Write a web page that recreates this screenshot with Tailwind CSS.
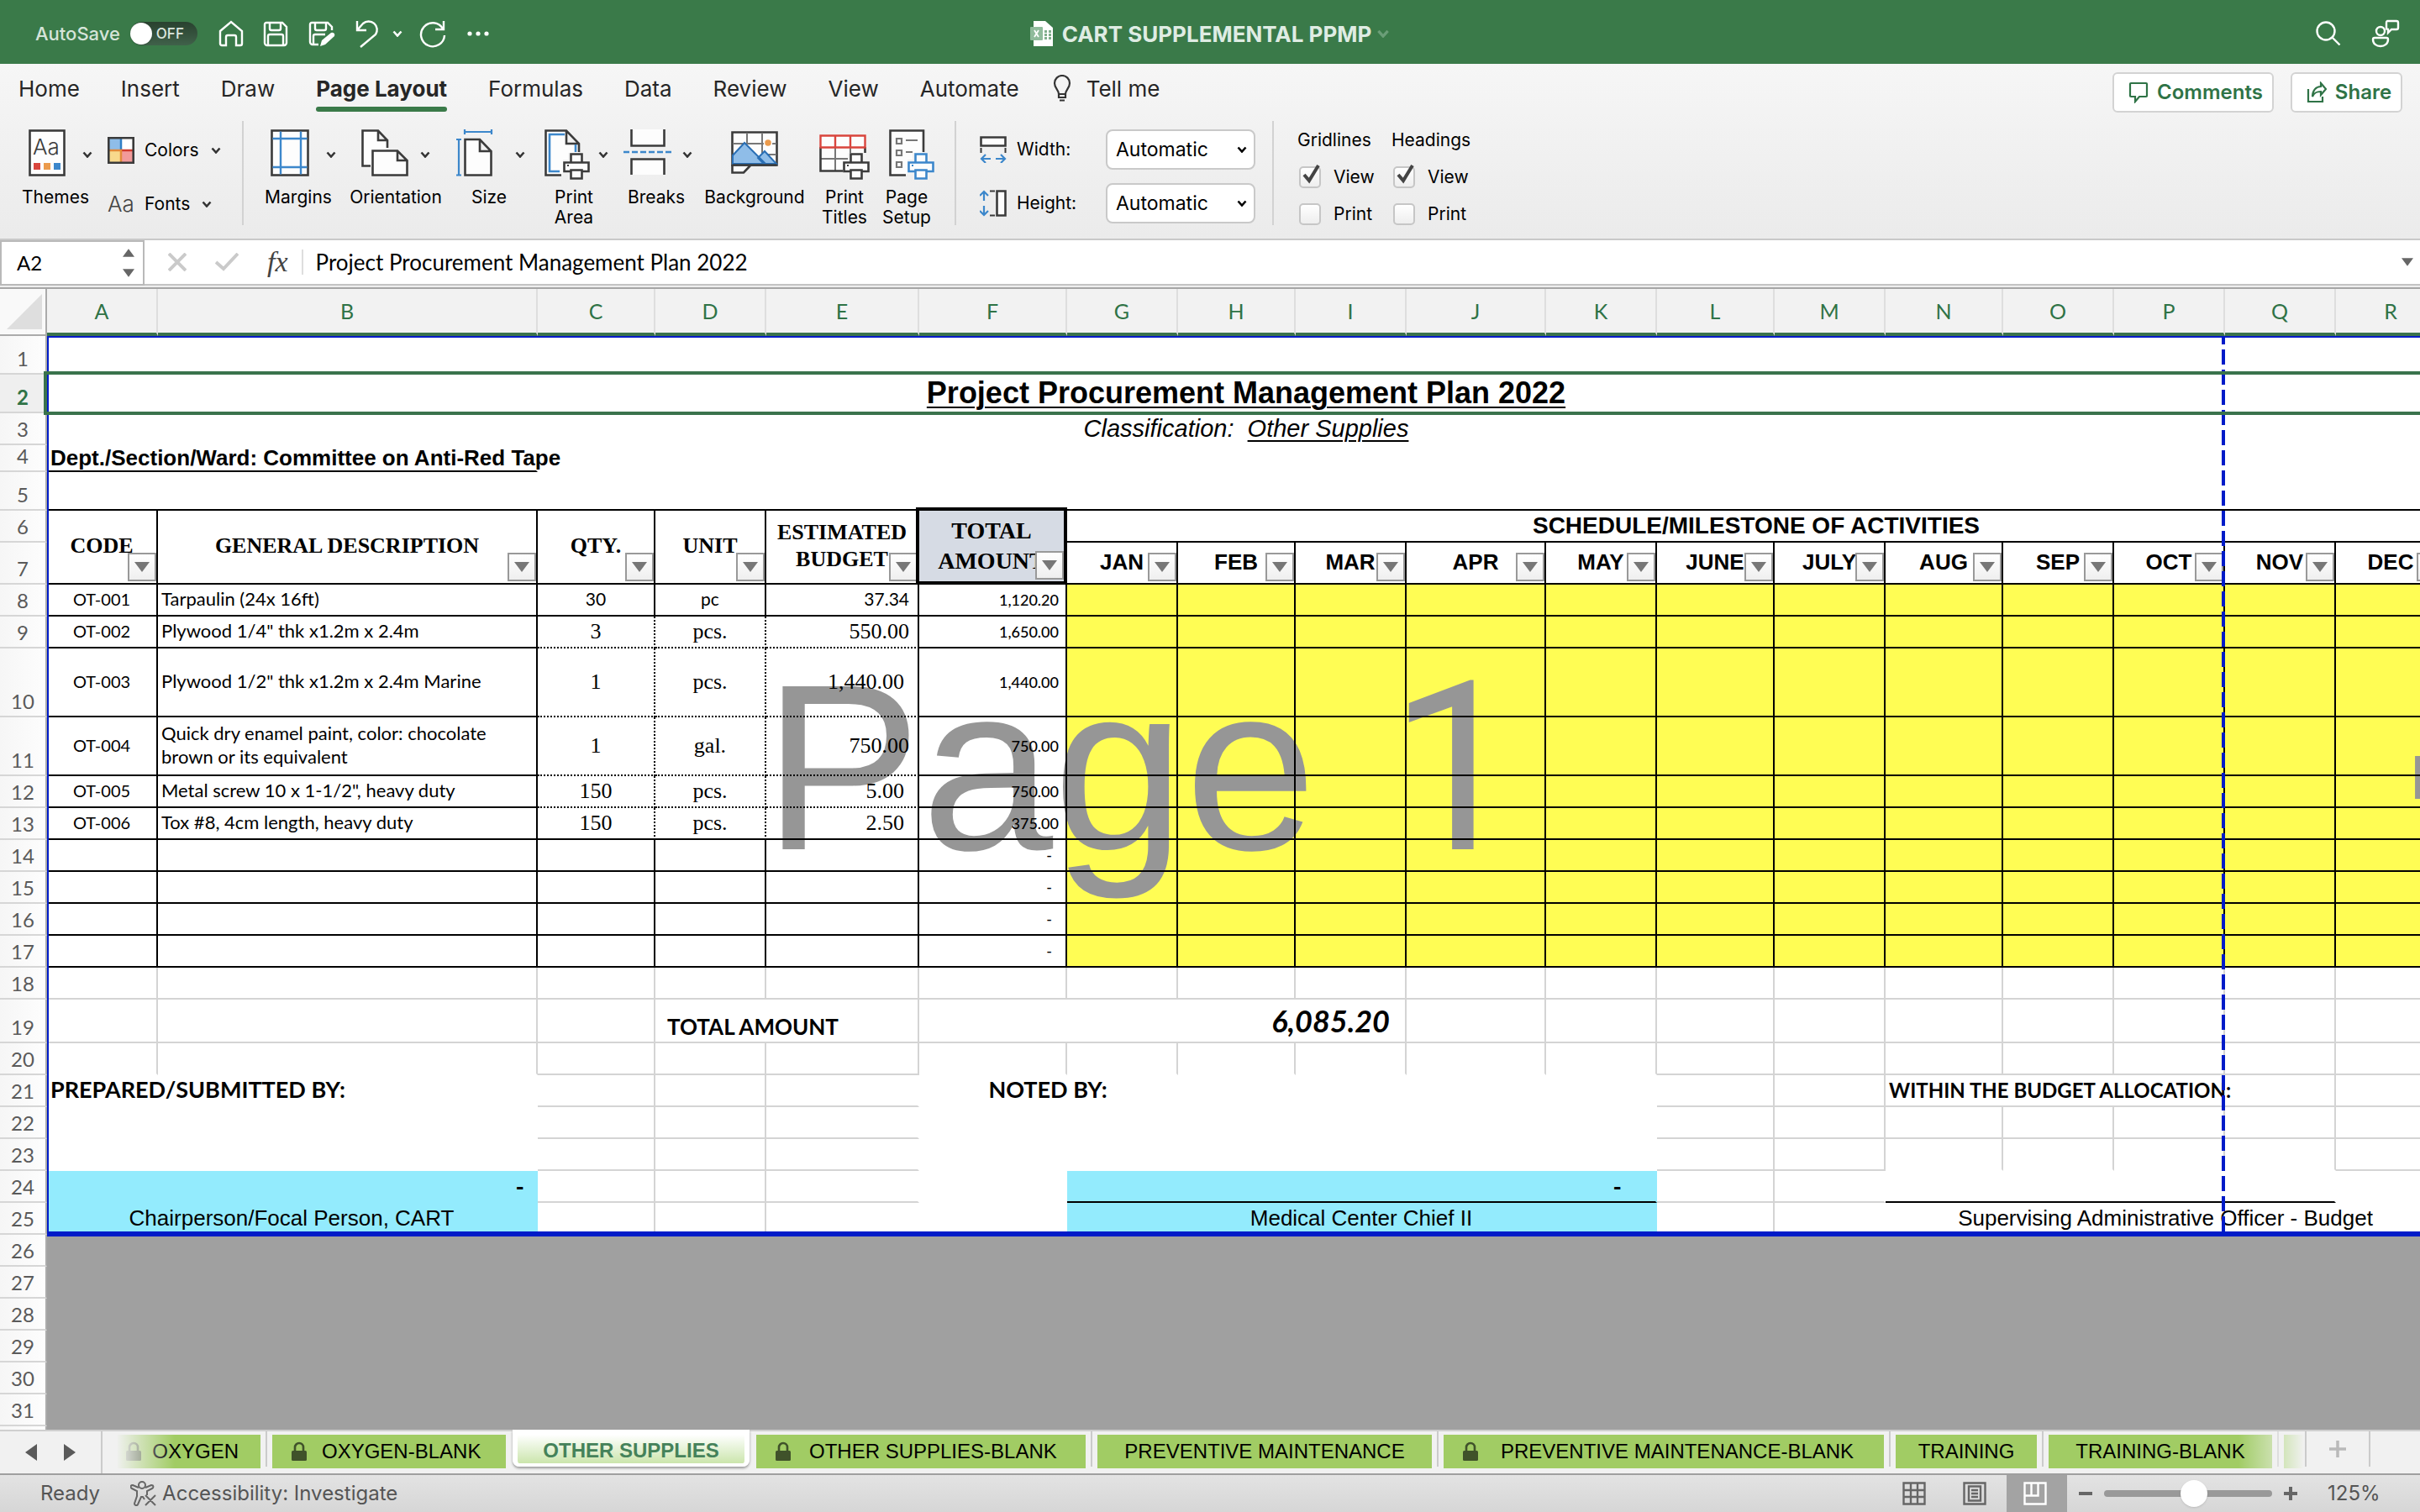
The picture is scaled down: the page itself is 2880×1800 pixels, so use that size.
<!DOCTYPE html>
<html lang="en">
<head>
  <meta charset="UTF-8" />
  <meta name="viewport" content="width=device-width, initial-scale=1.0"/>
  <title>CART SUPPLEMENTAL PPMP</title>
  <script src="https://cdn.jsdelivr.net/npm/@tailwindcss/browser@4"></script>
</head>
<body class="flex h-screen flex-col overflow-hidden bg-white font-['Inter',sans-serif] text-black">

  <!-- Shared symbols -->
  <svg class="hidden">
    <symbol id="caret" viewBox="0 0 12 8"><path d="M1.5 1.5 6 6.5l4.500-5" fill="none" stroke="currentColor" stroke-width="2.600"/></symbol>
    <symbol id="printer" viewBox="0 0 32 32">
      <path d="M8 0h16v12H8zM0 10h32v14H0zM8 20h16v12H8z" fill="#f2f2f2" stroke="#f2f2f2" stroke-width="4"/>
      <path d="M9.500 12V1.500h13V12M9.500 22H1.500V11.500h29V22h-8M9.500 20.500h13v10h-13z" fill="#fdfdfd" stroke="currentColor" stroke-width="2.600"/>
      <path d="M5 15h2" stroke="currentColor" stroke-width="2"/>
    </symbol>
    <symbol id="lock" viewBox="0 0 20 24"><path d="M5 12V7a5 5 0 0 1 10 0v5" fill="none" stroke="currentColor" stroke-width="2.600"/><rect x="1" y="11" width="18" height="12" rx="1.500" fill="currentColor"/></symbol>
    <symbol id="filter" viewBox="0 0 18 12"><path d="M0 0h18L9 12z" fill="currentColor"/></symbol>
  </svg>

  <!-- Title bar -->
  <header class="grid h-19 shrink-0 grid-cols-[1fr_auto_1fr] items-center bg-[#3a7a49] px-6 pt-1 text-white">
    <div class="flex items-center pl-[18px]">
      <label for="autosave" class="text-[22px] font-medium text-[#d5e4d9]">AutoSave</label>
      <span class="relative ml-3 flex">
        <input id="autosave" type="checkbox" role="switch" class="h-7 w-20 appearance-none rounded-full bg-gradient-to-b from-[#29412f] to-[#40614a] before:block before:size-[26px] before:translate-y-px before:rounded-full before:bg-white before:shadow">
        <span class="pointer-events-none absolute right-4 top-0 text-[17px] font-medium leading-7 text-[#dbe6de]">OFF</span>
      </span>
      <button aria-label="Home" class="ml-[25px]"><svg class="h-8 w-[30px]" viewBox="0 0 30 32" fill="none" stroke="#fff" stroke-width="2.400"><path d="M2 13 15 2l13 11v15a2 2 0 0 1-2 2h-5V20a2 2 0 0 0-2-2h-8a2 2 0 0 0-2 2v10H4a2 2 0 0 1-2-2z"/></svg></button>
      <button aria-label="Save" class="ml-[23px]"><svg class="h-8 w-[30px]" viewBox="0 0 30 32" fill="none" stroke="#fff" stroke-width="2.400"><path d="M4 3h19l5 5v19a3 3 0 0 1-3 3H5a3 3 0 0 1-3-3V5a2 2 0 0 1 2-2zM8 3v7a2 2 0 0 0 2 2h9a2 2 0 0 0 2-2V3M6 30V19a2 2 0 0 1 2-2h14a2 2 0 0 1 2 2v11"/></svg></button>
      <button aria-label="Save as" class="ml-6"><svg class="h-8 w-8" viewBox="0 0 32 32" fill="none" stroke="#fff" stroke-width="2.400"><path d="M12 29H5a3 3 0 0 1-3-3V5a2 2 0 0 1 2-2h19l5 5v4M8 3v7a2 2 0 0 0 2 2h9a2 2 0 0 0 2-2V3M6 29V19a2 2 0 0 1 2-2h12"/><path d="m14 31 2-7 11-9a3 3 0 0 1 4 4L20 29z" fill="#fff" stroke="none"/></svg></button>
      <button aria-label="Undo" class="ml-6"><svg class="h-9 w-7" viewBox="0 0 28 36" fill="none" stroke="#fff" stroke-width="2.400"><path d="M2 3v11h11M2 14 9 6a10 10 0 0 1 15 13L6 34"/></svg></button>
      <button aria-label="Undo history" class="ml-4"><svg class="h-2 w-3"><use href="#caret"/></svg></button>
      <button aria-label="Redo" class="ml-5"><svg class="h-9 w-8" viewBox="0 0 32 36" fill="none" stroke="#fff" stroke-width="2.400"><path d="M29 3v10H19M28 12a14 14 0 1 0 2 8"/></svg></button>
      <button aria-label="More" class="ml-6"><svg class="h-2 w-7" viewBox="0 0 28 8" fill="#fff"><circle cx="4" cy="4" r="2.600"/><circle cx="14" cy="4" r="2.600"/><circle cx="24" cy="4" r="2.600"/></svg></button>
    </div>
    <h1 class="flex items-center text-[26px] font-bold text-[#dfece3]">
      <svg class="mr-[11px] h-[30px] w-[27px]" viewBox="0 0 27 30"><path d="M4 0h14l9 8v22H4z" fill="#fff"/><path d="M17 11h3v3h-3zm5 0h3v3h-3zm-5 4h3v3h-3zm5 0h3v3h-3zm-5 4h3v3h-3zm5 0h3v3h-3z" fill="#7fae8b"/><rect y="7" width="15" height="16" rx="1" fill="#8fbb9b"/><path d="m5 11 5 8m0-8-5 8" stroke="#fff" stroke-width="1.800"/></svg>
      CART SUPPLEMENTAL PPMP
      <svg class="ml-1.5 h-2.5 w-4 text-[#6b9e78]"><use href="#caret"/></svg>
    </h1>
    <div class="flex items-center justify-end gap-9">
      <button aria-label="Search"><svg class="size-[30px]" viewBox="0 0 30 30" fill="none" stroke="#fff" stroke-width="2.400"><circle cx="12" cy="12" r="10.500"/><path d="m19.500 19.500 9 9"/></svg></button>
      <button aria-label="Presence"><svg class="size-[34px]" viewBox="0 0 34 34" fill="none" stroke="#fff" stroke-width="2.400"><circle cx="11" cy="14" r="5"/><path d="M4 22h14a2 2 0 0 1 2 2c0 5-4 8-9 8s-9-3-9-8a2 2 0 0 1 2-2zM19 2h11a2 2 0 0 1 2 2v6a2 2 0 0 1-2 2h-6l-4 4v-4a2 2 0 0 1-2-2V4a2 2 0 0 1 1-2z"/></svg></button>
    </div>
  </header>

  <div class="shrink-0 border-b-2 border-[#c9c9c9] bg-gradient-to-b from-[#f6f6f6] to-[#ebebeb]">
    <!-- Ribbon tabs -->
    <div class="flex h-16 items-center pb-1.5 pl-[22px] pr-[21px] text-[26px] text-[#262626]">
      <nav class="flex items-center gap-[49px]">
        <a href="#">Home</a>
        <a href="#">Insert</a>
        <a href="#">Draw</a>
        <a href="#" class="relative font-bold after:absolute after:inset-x-0 after:-bottom-2 after:h-1.5 after:rounded-full after:bg-[#3a7a49]">Page Layout</a>
        <a href="#">Formulas</a>
        <a href="#">Data</a>
        <a href="#">Review</a>
        <a href="#">View</a>
        <a href="#">Automate</a>
      </nav>
      <a href="#" class="ml-10 flex items-center gap-[18px]">
        <svg class="h-8 w-[22px]" viewBox="0 0 22 32" fill="none" stroke="#333" stroke-width="2.200"><path d="M7 23c0-5-5-7-5-13a9 9 0 0 1 18 0c0 6-5 8-5 13zM7 23v4h8v-4M8 30.500h6"/></svg>
        Tell me
      </a>
      <div class="ml-auto flex gap-5 pt-2.5 text-2xl font-semibold text-[#2f7346]">
        <button class="flex h-12 w-48 items-center justify-center gap-2.5 rounded-md border-2 border-[#d3d3d3] bg-white pl-1.5">
          <svg class="h-[26px] w-6" viewBox="0 0 24 26" fill="none" stroke="currentColor" stroke-width="2.200"><path d="M3 2h18a1 1 0 0 1 1 1v14a1 1 0 0 1-1 1h-8l-5 6v-6H3a1 1 0 0 1-1-1V3a1 1 0 0 1 1-1z"/></svg>
          Comments
        </button>
        <button class="flex h-12 w-[133px] items-center justify-center gap-2.5 rounded-md border-2 border-[#d3d3d3] bg-white pl-1.5">
          <svg class="h-[26px] w-6" viewBox="0 0 24 26" fill="none" stroke="currentColor" stroke-width="2.200"><path d="M2 9v15h17v-6M17 2l6 7-6 7v-4c-5 0-8 1-10 6 0-7 4-12 10-12z"/></svg>
          Share
        </button>
      </div>
    </div>

    <!-- Ribbon groups -->
    <div class="flex h-36 pt-1 text-[21px] leading-6">
      <button class="ml-[27px] flex w-[90px] flex-col items-center pt-2">
        <span class="flex items-center gap-5">
          <svg class="h-16 w-11" viewBox="0 0 44 64"><rect x="1.500" y="3.500" width="41" height="53" fill="#fdfdfd" stroke="#3b3b3b" stroke-width="2.600"/><text x="5" y="32" font-family="Inter" font-size="26" font-weight="300" fill="#3b3b3b">Aa</text><path d="M6 42h8v8H6z" fill="#d9453d"/><path d="M18 42h8v8h-8z" fill="#eb9a4b"/><path d="M30 42h8v8h-8z" fill="#3c87cb"/></svg>
          <svg class="h-2 w-3 text-[#333]"><use href="#caret"/></svg>
        </span>
        <span class="mt-[7px] pr-3">Themes</span>
      </button>
      <div class="ml-[11px] flex w-[160px] flex-col gap-9 pt-[19px]">
        <button class="flex items-center">
          <svg class="size-8" viewBox="0 0 32 32"><path d="M1 1h15v15H1z" fill="#8fbde8"/><path d="M16 1h15v15H16z" fill="#fff"/><path d="M1 16h15v15H1z" fill="#f8d98c"/><path d="M16 16h15v15H16z" fill="#f29a9a"/><path d="M16 1v15" stroke="#2f7fc6" stroke-width="2.500"/><path d="M16 16h15" stroke="#d13b2e" stroke-width="2.500"/><path d="M1 16h15v15" stroke="#e28a3b" stroke-width="2.500" fill="none"/><path d="M1.300 1.300h29.400v29.400H1.300z" fill="none" stroke="#3b3b3b" stroke-width="2.600"/></svg>
          <span class="ml-3">Colors</span>
          <svg class="ml-3.5 h-2 w-3 text-[#333]"><use href="#caret"/></svg>
        </button>
        <button class="flex h-6 items-center">
          <span class="w-8 text-[26px] font-light text-[#444]">Aa</span>
          <span class="ml-3">Fonts</span>
          <svg class="ml-3.5 h-2 w-3 text-[#333]"><use href="#caret"/></svg>
        </button>
      </div>
      <div class="h-[124px] w-0.5 bg-[#d2d2d2]"></div>

      <div class="ml-[26px] flex items-start pt-2">
        <button class="flex w-[90px] flex-col items-center">
          <span class="flex items-center gap-5">
            <svg class="h-16 w-[46px]" viewBox="0 0 46 64"><rect x="1.500" y="3.500" width="43" height="53" fill="#fdfdfd" stroke="#3b3b3b" stroke-width="2.600"/><path d="M12 4.500v51M36 4.500v51M2.500 13h41M2.500 47h41" stroke="#3c87cb" stroke-width="2.400"/></svg>
            <svg class="h-2 w-3 text-[#333]"><use href="#caret"/></svg>
          </span>
          <span class="mt-[7px] pr-3">Margins</span>
        </button>
        <button class="flex w-[130px] flex-col items-center">
          <span class="flex items-center gap-3.5">
            <svg class="h-16 w-14" viewBox="0 0 56 64" fill="#fdfdfd" stroke="#3b3b3b" stroke-width="2.600"><path d="M11 45.500H1.500v-42H20L31 15v9M20 3.500V15h11"/><path d="M13.500 27.500H43L54.500 39v17.500h-41zM43 27.500V39h11.500"/></svg>
            <svg class="h-2 w-3 text-[#333]"><use href="#caret"/></svg>
          </span>
          <span class="mt-[7px]">Orientation</span>
        </button>
        <button class="flex w-24 flex-col items-center">
          <span class="flex items-center gap-[26px]">
            <svg class="h-16 w-11" viewBox="0 0 44 64" fill="none" stroke-width="2.600"><path d="M10.500 14H28l13.500 14v28.500h-31zM28 14v14h13.500" fill="#fdfdfd" stroke="#3b3b3b"/><path d="M10 5h32M10 2v6M42 2v6M3 14v42M0 14h6M0 56.500h6" stroke="#3c87cb" stroke-width="2.200"/></svg>
            <svg class="h-2 w-3 text-[#333]"><use href="#caret"/></svg>
          </span>
          <span class="mt-[7px] pr-1">Size</span>
        </button>
        <button class="flex w-[108px] flex-col items-center">
          <span class="flex items-center gap-2.5">
            <svg class="h-16 w-[54px] text-[#3b3b3b]" viewBox="0 0 54 64" fill="none" stroke-width="2.600"><path d="M20 56.500H1.500v-53H26L41 19v10M26 3.500V19h15" fill="#fdfdfd" stroke="#3b3b3b"/><path d="M24 8H6v44h12M37 20v9" stroke="#3c87cb"/><use href="#printer" x="22" y="30" width="32" height="32"/></svg>
            <svg class="h-2 w-3 text-[#333]"><use href="#caret"/></svg>
          </span>
          <span class="mt-[7px] pr-1.5">Print<br>Area</span>
        </button>
        <button class="flex w-[86px] flex-col items-center">
          <span class="flex items-center gap-3">
            <svg class="h-16 w-[58px]" viewBox="0 0 58 64" fill="#fdfdfd" stroke="#3b3b3b" stroke-width="2.600"><path d="M9.500 2v19.500h39V2M9.500 56V37.500h39V56"/><path d="M0 29h58" stroke="#3c87cb" stroke-dasharray="7 3"/></svg>
            <svg class="h-2 w-3 text-[#333]"><use href="#caret"/></svg>
          </span>
          <span class="mt-[7px] pr-1">Breaks</span>
        </button>
        <button class="flex w-36 flex-col items-center">
          <svg class="h-16 w-14" viewBox="0 0 56 64" fill="none" stroke="#3b3b3b" stroke-width="2.600"><path d="M1.500 44v9.500H15L23 45" fill="#fdfdfd"/><path d="M1.500 5.500h53v39h-53z" fill="#fdfdfd"/><path d="M19 6v14M37 6v38M2 19h52M40 32h14" stroke="#777" stroke-width="2"/><circle cx="44" cy="18" r="4.500" fill="#eb9a4b" stroke="#fdfdfd" stroke-width="1.500"/><path d="M2 43V33L16 18l25 25zM32 36l8-8 14 15H39z" fill="#8fbde8" stroke="#2a6fb5" stroke-width="2"/><path d="M1.500 44.500h53" /></svg>
          <span class="mt-[7px]">Background</span>
        </button>
        <button class="flex w-[70px] flex-col items-center">
          <svg class="h-16 w-[60px] text-[#3b3b3b]" viewBox="0 0 60 64" fill="none" stroke-width="2.600"><path d="M1.500 23h53v28h-53z" fill="#fdfdfd"/><path d="M19 24v27M2 37h52M37 24v12" stroke="#777" stroke-width="2"/><path d="M1.500 23v28.500H28M54.500 23v7" stroke="#3b3b3b"/><path d="M1.500 9.500h53v14h-53zM19 9.500v14M37 9.500v14" fill="#fdfdfd" stroke="#d9453d" stroke-width="2.400"/><use href="#printer" x="28" y="30" width="32" height="32"/></svg>
          <span class="mt-[7px]">Print<br>Titles</span>
        </button>
        <button class="flex w-[90px] flex-col items-center">
          <svg class="h-16 w-[54px] text-[#3c87cb]" viewBox="0 0 54 64" fill="none" stroke-width="2.600"><path d="M20 56.500H1.500v-53h39.500V29" fill="#fdfdfd" stroke="#3b3b3b"/><path d="M9 13h6v6H9zM9 27h6v6H9zM9 41h6v6H9zM20 15h14M20 29h8" stroke="#777" stroke-width="2.200"/><use href="#printer" x="22" y="30" width="32" height="32"/></svg>
          <span class="mt-[7px] pr-3">Page<br>Setup</span>
        </button>
      </div>
      <div class="ml-1.5 h-[124px] w-0.5 bg-[#d2d2d2]"></div>

      <!-- Scale to fit -->
      <div class="ml-7 grid h-[122px] grid-cols-[44px_106px_178px] grid-rows-[48px_48px] items-center gap-y-4 pt-2.5">
        <svg class="size-8" viewBox="0 0 32 32" fill="none" stroke="#3b3b3b" stroke-width="2.600"><path d="M1.500 1.500h29v10h-29z" fill="#fdfdfd"/><path d="M1.500 14v6M30.500 14v6" stroke-width="2"/><path d="M13 27H2M7 22l-5 5 5 5M19 27h11M25 22l5 5-5 5" stroke="#3c87cb" stroke-width="2.200"/></svg>
        <label for="fit-width">Width:</label>
        <span class="relative flex items-center">
          <select id="fit-width" class="h-12 w-full appearance-none rounded-lg border-2 border-[#c9c9c9] bg-white pl-2.5 text-[23px]"><option>Automatic</option></select>
          <svg class="pointer-events-none absolute right-2.5 h-2 w-3"><use href="#caret"/></svg>
        </span>
        <svg class="size-8" viewBox="0 0 32 32" fill="none" stroke="#3b3b3b" stroke-width="2.600"><path d="M20.500 1.500h10v29h-10z" fill="#fdfdfd"/><path d="M12 1.500h6M12 30.500h6" stroke-width="2"/><path d="M5 13V2M0 7l5-5 5 5M5 19v11M0 25l5 5 5-5" stroke="#3c87cb" stroke-width="2.200"/></svg>
        <label for="fit-height">Height:</label>
        <span class="relative flex items-center">
          <select id="fit-height" class="h-12 w-full appearance-none rounded-lg border-2 border-[#c9c9c9] bg-white pl-2.5 text-[23px]"><option>Automatic</option></select>
          <svg class="pointer-events-none absolute right-2.5 h-2 w-3"><use href="#caret"/></svg>
        </span>
      </div>
      <div class="ml-5 h-[124px] w-0.5 bg-[#d2d2d2]"></div>

      <!-- Sheet options -->
      <fieldset class="ml-7 w-28 pt-[11px]">
        <legend class="float-left w-full">Gridlines</legend>
        <label class="flex w-full items-center gap-[15px] pt-[19px] pl-0.5">
          <span class="relative flex">
            <input type="checkbox" checked class="peer size-[26px] appearance-none rounded-[5px] border-2 border-[#c6c6c6] bg-gradient-to-b from-white to-[#eeeeee]">
            <svg class="absolute -top-0.5 left-1 hidden h-6 w-[22px] peer-checked:block" viewBox="0 0 22 24" fill="none" stroke="#444" stroke-width="4"><path d="m2 12 6 7L19 1"/></svg>
          </span>
          View
        </label>
        <label class="flex w-full items-center gap-[15px] pt-[18px] pl-0.5">
          <input type="checkbox" class="size-[26px] appearance-none rounded-[5px] border-2 border-[#c6c6c6] bg-gradient-to-b from-white to-[#eeeeee]">
          Print
        </label>
      </fieldset>
      <fieldset class="w-28 pt-[11px]">
        <legend class="float-left w-full">Headings</legend>
        <label class="flex w-full items-center gap-[15px] pt-[19px] pl-0.5">
          <span class="relative flex">
            <input type="checkbox" checked class="peer size-[26px] appearance-none rounded-[5px] border-2 border-[#c6c6c6] bg-gradient-to-b from-white to-[#eeeeee]">
            <svg class="absolute -top-0.5 left-1 hidden h-6 w-[22px] peer-checked:block" viewBox="0 0 22 24" fill="none" stroke="#444" stroke-width="4"><path d="m2 12 6 7L19 1"/></svg>
          </span>
          View
        </label>
        <label class="flex w-full items-center gap-[15px] pt-[18px] pl-0.5">
          <input type="checkbox" class="size-[26px] appearance-none rounded-[5px] border-2 border-[#c6c6c6] bg-gradient-to-b from-white to-[#eeeeee]">
          Print
        </label>
      </fieldset>
    </div>
  </div>

  <!-- Formula bar -->
  <div class="flex h-[58px] shrink-0 items-stretch border-b-2 border-[#a6a6a6] bg-[#eeeeee] pb-0.5 font-['Lato',sans-serif]">
    <div class="flex w-[172px] items-center border-2 border-[#b9b9b9] bg-white">
      <input aria-label="Name box" value="A2" class="w-36 pl-[18px] text-2xl outline-none">
      <span class="flex flex-col gap-3 text-[#666]">
        <svg class="h-3 w-3.5 rotate-180"><use href="#filter"/></svg>
        <svg class="h-3 w-3.5"><use href="#filter"/></svg>
      </span>
    </div>
    <div class="flex grow items-center border-b-2 border-[#c4c4c4] bg-white pl-7">
      <button aria-label="Cancel"><svg class="size-[22px]" viewBox="0 0 22 22" stroke="#cacaca" stroke-width="4"><path d="m1 1 20 20M21 1 1 21"/></svg></button>
      <button aria-label="Enter" class="ml-[34px]"><svg class="h-[22px] w-7" viewBox="0 0 28 22" fill="none" stroke="#cacaca" stroke-width="4"><path d="m1 11 9 8L27 1"/></svg></button>
      <button aria-label="Insert function" class="ml-[34px] font-['Liberation_Serif',serif] text-[34px] leading-9 italic text-[#444]">fx</button>
      <div class="ml-4 h-[30px] w-0.5 bg-[#dedede]"></div>
      <input aria-label="Formula" value="Project Procurement Management Plan 2022" class="ml-[15px] grow text-[26px] outline-none">
      <button aria-label="Expand formula bar" class="mr-2 text-[#666]"><svg class="h-3 w-3.5"><use href="#filter"/></svg></button>
    </div>
  </div>

  <!-- Sheet -->
  <main class="relative isolate min-h-0 grow overflow-hidden bg-white">
    <!-- shading and page watermarks sit under the grid lines -->
    <div class="absolute top-[352px] right-0 left-[1270px] -z-20 h-[456px] bg-[#fffd54]"></div>
    <div class="absolute top-[408px] left-14 -z-10 w-[2592px] pl-4 text-center font-['Liberation_Sans',sans-serif] text-[282px] leading-[324px] text-[#969696]">Page <span class="ml-2 font-['Roboto',sans-serif]">1</span></div>
    <div class="absolute top-[540px] left-[2868px] -z-10 font-['Liberation_Sans',sans-serif] text-[74px] leading-[84px] whitespace-nowrap text-[#969696]">Page 2</div>

    <table class="w-[2912px] table-fixed border-separate border-spacing-0 font-['Lato',sans-serif] text-[22px] leading-7">
      <colgroup id="cols"></colgroup>
      <thead><tr id="letters"></tr></thead>
      <tbody id="grid"></tbody>
    </table>

    <!-- print area outline, page break and selection -->
    <div class="absolute top-14 right-0 left-14 h-[1072px] border-t-2 border-b-6 border-l-2 border-[#001bc8]"></div>
    <div class="absolute top-[58px] left-[2644px] h-[1064px] w-1 bg-[repeating-linear-gradient(#001bc8_0_8px,transparent_8px_14px,#001bc8_14px_24px)]"></div>
    <div class="absolute top-[98px] -right-1 left-[52px] h-[52px] border-4 border-[#3a734c]"></div>
  </main>

  <!-- Sheet tabs -->
  <div class="flex h-[54px] shrink-0 border-t-2 border-b-2 border-t-[#cfcfcf] border-b-[#9f9f9f] bg-[#f1f1f1] font-['Liberation_Sans',sans-serif] text-2xl">
    <div class="flex w-[122px] items-start gap-8 border-r-2 border-[#cbcbcb] pt-[15px] pl-[30px] text-[#5a5a5a]">
      <button aria-label="Previous sheet"><svg class="block h-5 w-3.5" viewBox="0 0 14 20"><path d="M14 0v20L0 10z" fill="currentColor"/></svg></button>
      <button aria-label="Next sheet"><svg class="block h-5 w-3.5" viewBox="0 0 14 20"><path d="M0 0v20l14-10z" fill="currentColor"/></svg></button>
    </div>
    <nav class="relative flex grow overflow-visible">
      <a href="#" class="mt-1 ml-[18px] flex h-10 w-[170px] items-center justify-end bg-[#a1cc64] pr-[26px]">
        <svg class="mr-3 h-6 w-5 text-[#40522a]"><use href="#lock"/></svg>OXYGEN</a>
      <span class="mx-1.5 h-[42px] w-0.5 bg-[#cbcbcb]"></span>
      <a href="#" class="mt-1 flex h-10 w-[278px] items-center bg-[#a1cc64] pl-[22px]">
        <svg class="mr-[17px] h-6 w-5 text-[#40522a]"><use href="#lock"/></svg>OXYGEN-BLANK</a>
      <a href="#" class="-mt-0.5 ml-2 flex h-11 w-[282px] items-center justify-center rounded-b-lg border-6 border-b-4 border-white bg-gradient-to-b from-white to-[#cbe5ac] pt-1 font-bold text-[#45825a] shadow-[0_2px_3px_#999]">OTHER SUPPLIES</a>
      <a href="#" class="mt-1 ml-2 flex h-10 w-[392px] items-center bg-[#a1cc64] pl-[22px]">
        <svg class="mr-[21px] h-6 w-5 text-[#40522a]"><use href="#lock"/></svg>OTHER SUPPLIES-BLANK</a>
      <span class="mx-1.5 h-[42px] w-0.5 bg-[#cbcbcb]"></span>
      <a href="#" class="mt-1 flex h-10 w-[398px] items-center justify-center bg-[#a1cc64]">PREVENTIVE MAINTENANCE</a>
      <span class="mx-1.5 h-[42px] w-0.5 bg-[#cbcbcb]"></span>
      <a href="#" class="mt-1 flex h-10 w-[524px] items-center bg-[#a1cc64] pl-[22px]">
        <svg class="mr-[26px] h-6 w-5 text-[#40522a]"><use href="#lock"/></svg>PREVENTIVE MAINTENANCE-BLANK</a>
      <span class="mx-1.5 h-[42px] w-0.5 bg-[#cbcbcb]"></span>
      <a href="#" class="mt-1 flex h-10 w-[168px] items-center justify-center bg-[#a1cc64]">TRAINING</a>
      <span class="mx-1.5 h-[42px] w-0.5 bg-[#cbcbcb]"></span>
      <a href="#" class="mt-1 flex h-10 w-[266px] items-center justify-center bg-gradient-to-r from-[#a1cc64] from-85% to-[#cbe0ad]">TRAINING-BLANK</a>
      <span class="mx-1.5 h-[42px] w-0.5 bg-[#dedede]"></span>
      <a href="#" aria-label="More sheets" class="mt-1 h-10 w-6 bg-gradient-to-r from-[#d3e5bb] to-[#f1f1f1]"></a>
      <!-- fade on the left edge -->
      <span class="pointer-events-none absolute top-1 left-4 h-10 w-[70px] bg-gradient-to-r from-[#f1f1f1] to-transparent"></span>
    </nav>
    <button aria-label="New sheet" class="mr-[59px] flex h-[42px] w-[78px] items-center justify-center border-x-2 border-[#cbcbcb]"><svg class="size-5" viewBox="0 0 20 20" stroke="#b9b9b9" stroke-width="3.500"><path d="M10 0v20M0 10h20"/></svg></button>
  </div>

  <!-- Status bar -->
  <footer class="flex h-11 shrink-0 items-center bg-gradient-to-b from-[#e3e3e3] to-[#d6d6d6] pl-12 text-2xl text-[#555]">
    <span>Ready</span>
    <button class="ml-9 flex items-center gap-1.5">
      <svg class="h-[30px] w-8" viewBox="0 0 32 30" fill="none" stroke="#666" stroke-width="2"><circle cx="14" cy="5" r="4"/><path d="M10 8 3 5C0 5 0 8 2 9l6 3v6L5 27c0 2 3 3 4 1l4-9h2l2 3M18 8l7-3c3 0 3 3 1 4l-6 3v5M18 17l12 12M30 17 18 29"/></svg>
      Accessibility: Investigate
    </button>
    <div class="ml-auto flex h-full items-center">
      <button aria-label="Normal view"><svg class="block size-[28px]" viewBox="0 0 28 28" fill="none" stroke="#666" stroke-width="2.400"><path d="M1.500 1.500h25v25h-25zM1.500 10h25M1.500 18h25M10 1.500v25M18 1.500v25"/></svg></button>
      <button aria-label="Page layout view" class="ml-11"><svg class="block size-[28px]" viewBox="0 0 28 28" fill="none" stroke="#666" stroke-width="2.400"><path d="M1.500 1.500h25v25h-25zM7 5.500h14v17H7zM10 10h8M10 14h8M10 18h8"/></svg></button>
      <button aria-label="Page break preview" class="ml-6 flex h-full w-[72px] items-center justify-center bg-[#a3a3a3] pr-1"><svg class="size-[28px]" viewBox="0 0 28 28" fill="none" stroke="#fff" stroke-width="2.400"><path d="M1.500 1.500h25v25h-25zM1.500 16.500h16v-15M9.500 1.500v15"/></svg></button>
      <button aria-label="Zoom out" class="ml-3.5"><svg class="block size-4" viewBox="0 0 16 16"><path d="M0 6h16v4H0z" fill="#666"/></svg></button>
      <input type="range" aria-label="Zoom" min="0" max="100" value="54" class="ml-3.5 h-2 w-[200px] appearance-none rounded-full bg-[#999] [&::-webkit-slider-thumb]:size-8 [&::-webkit-slider-thumb]:appearance-none [&::-webkit-slider-thumb]:rounded-full [&::-webkit-slider-thumb]:bg-white [&::-webkit-slider-thumb]:shadow">
      <button aria-label="Zoom in" class="ml-3.5"><svg class="block size-4" viewBox="0 0 16 16"><path d="M0 6h6V0h4v6h6v4h-6v6H6v-6H0z" fill="#666"/></svg></button>
      <span class="ml-9 w-[110px]">125%</span>
    </div>
  </footer>

  <script>
    const letters = 'ABCDEFGHIJKLMNOPQR'.split('');
    const widths = [132, 452, 140, 132, 182, 176, 132, 140, 132, 166, 132, 140, 132, 140, 132, 132, 132, 132];
    const heights = [46, 46, 38, 32, 46, 38, 50, 38, 38, 82, 70, 38, 38, 38, 38, 38, 38, 38, 52, 38, 38, 38, 38, 38, 38, 38, 38, 38, 38, 38, 38, 38];

    const head = "text-center align-middle font-['Liberation_Serif',serif] text-[26px] leading-8 font-bold pb-0.5";
    const month = "text-center align-middle font-['Liberation_Sans',sans-serif] text-[26px] leading-8 font-bold pb-0.5";
    const serif = "font-['Liberation_Serif',serif] text-[26px]";
    const arial = "text-center font-['Liberation_Sans',sans-serif] text-[26px] leading-8 whitespace-nowrap";

    // cols / rows are spans, filter adds the drop-down arrow
    const cells = {
      A1: { cols: 18 },
      A2: { cols: 18, text: 'Project Procurement Management Plan 2022', cls: "text-center font-['Liberation_Sans',sans-serif] text-[36px] leading-10 font-bold underline decoration-2 underline-offset-4" },
      A3: { cols: 18, text: 'Classification:&nbsp; <span class="underline decoration-2 underline-offset-4">Other Supplies</span>', cls: "text-center font-['Liberation_Sans',sans-serif] text-[29px] leading-8 italic" },
      A4: { cols: 2, text: 'Dept./Section/Ward: Committee on Anti-Red Tape', cls: "pl-1 font-['Liberation_Sans',sans-serif] text-[26px] leading-[30px] font-bold whitespace-nowrap" },
      C4: { cols: 16 },
      A5: { cols: 18 },
      A6: { rows: 2, text: 'CODE', cls: head, filter: true },
      B6: { rows: 2, text: 'GENERAL DESCRIPTION', cls: head, filter: true },
      C6: { rows: 2, text: 'QTY.', cls: head, filter: true },
      D6: { rows: 2, text: 'UNIT', cls: head, filter: true },
      E6: { rows: 2, text: 'ESTIMATED BUDGET', cls: head, filter: true },
      F6: { rows: 2, text: 'TOTAL AMOUNT', cls: "text-center align-middle font-['Liberation_Serif',serif] text-[28px] leading-9 font-bold bg-[#d6dbe4] border-r-4 border-b-4 px-5 shadow-[-4px_0_0_#000,0_-4px_0_#000,-4px_-4px_0_#000]", filter: true },
      G6: { cols: 12, text: 'SCHEDULE/MILESTONE OF ACTIVITIES', cls: "text-center font-['Liberation_Sans',sans-serif] text-[28px] leading-8 font-bold" },
      D19: { cols: 2, text: 'TOTAL AMOUNT', cls: 'pl-3.5 pb-0.5 text-[26px] leading-8 font-bold align-bottom' },
      F19: { cols: 4, text: '6,085.20', cls: 'pr-[18px] text-right text-[36px] leading-10 font-bold italic' },
      A21: { cols: 2, text: 'PREPARED/SUBMITTED BY:', cls: 'pl-1 pb-0.5 text-[27px] leading-8 font-bold whitespace-nowrap' },
      F21: { cols: 2, text: 'NOTED BY:', cls: 'pb-0.5 text-center text-[27px] leading-8 font-bold' },
      N21: { cols: 4, text: 'WITHIN THE BUDGET ALLOCATION:', cls: 'pl-1 text-[24px] leading-8 font-bold whitespace-nowrap' },
      A24: { cols: 2, text: '-', cls: 'bg-[#93ebfd] pr-3.5 text-right text-[28px] font-bold' },
      G24: { cols: 5, text: '-', cls: 'bg-[#93ebfd] pr-10 text-right text-[28px] font-bold' },
      A25: { cols: 2, text: 'Chairperson/Focal Person, CART', cls: arial + ' bg-[#93ebfd]' },
      G25: { cols: 5, text: 'Medical Center Chief II', cls: arial + ' bg-[#93ebfd]' },
      N24: { cols: 4 },
      N25: { cols: 5, text: 'Supervising Administrative Officer - Budget', cls: arial },
    };
    'JAN FEB MAR APR MAY JUNE JULY AUG SEP OCT NOV DEC'.split(' ').forEach((m, i) => {
      cells[letters[6 + i] + 7] = { text: m, cls: month, filter: true };
    });

    const items = [
      ['OT-001', 'Tarpaulin (24x 16ft)', '30', 'pc', '37.34', '1,120.20'],
      ['OT-002', 'Plywood 1/4" thk x1.2m x 2.4m', '3', 'pcs.', '550.00', '1,650.00'],
      ['OT-003', 'Plywood 1/2" thk x1.2m x 2.4m Marine', '1', 'pcs.', '1,440.00', '1,440.00'],
      ['OT-004', 'Quick dry enamel paint, color: chocolate brown or its equivalent', '1', 'gal.', '750.00', '750.00'],
      ['OT-005', 'Metal screw 10 x 1-1/2", heavy duty', '150', 'pcs.', '5.00', '750.00'],
      ['OT-006', 'Tox #8, 4cm length, heavy duty', '150', 'pcs.', '2.50', '375.00'],
    ];
    items.forEach((item, i) => {
      const r = 8 + i;
      const font = i ? serif : 'text-[21px] pb-0.5';
      cells['A' + r] = { text: item[0], cls: 'pb-0.5 text-center text-[20px]' };
      cells['B' + r] = { text: item[1], cls: 'pl-1 pr-8 pb-0.5 text-[22px]' };
      cells['C' + r] = { text: item[2], cls: 'text-center ' + font };
      cells['D' + r] = { text: item[3], cls: 'text-center ' + font };
      cells['E' + r] = { text: item[4], cls: 'text-right ' + font + ([2, 4, 5].includes(i) ? ' pr-4' : ' pr-2.5') };
      cells['F' + r] = { text: item[5], cls: 'pr-2 text-right text-[18px] font-medium' };
    });
    for (let r = 14; r <= 17; r++) cells['F' + r] = { text: '-', cls: 'pr-4 text-right text-[18px] font-medium' };

    const K = 10, E = 4;
    function rightLine(r, c) {
      if (r <= 5) return 'border-r-transparent';
      if (r <= 17) return r >= 9 && r <= 13 && (c === 2 || c === 3) ? 'border-r-black [border-right-style:dotted]' : 'border-r-black';
      if (r <= 20) return 'border-r-[#d4d4d4]';
      if (c <= 1 || (c >= E && c <= K)) return 'border-r-transparent';
      if (r >= 24 && c >= 12) return 'border-r-transparent';
      return 'border-r-[#d4d4d4]';
    }
    function bottomLine(r, c) {
      if (r === 4 && c <= 1) return 'border-b-black';
      if (r < 5) return 'border-b-transparent';
      if (r <= 17) return r >= 9 && r <= 12 && c >= 2 && c <= E ? 'border-b-black [border-bottom-style:dotted]' : 'border-b-black';
      if (r <= 19) return 'border-b-[#d4d4d4]';
      if (r === 24 && ((c >= 6 && c <= K) || (c >= 13 && c <= 16))) return 'border-b-black';
      if (c <= 1 || (c > E && c <= K)) return 'border-b-transparent';
      if (r >= 23 && c >= 13 && c <= 16) return 'border-b-transparent';
      if (r >= 24 && c > 16) return 'border-b-transparent';
      return 'border-b-[#d4d4d4]';
    }

    document.getElementById('cols').innerHTML =
      '<col style="width:56px">' + widths.map(w => `<col style="width:${w}px">`).join('');

    document.getElementById('letters').innerHTML = `
      <th class="h-14 border-r-2 border-b-2 border-[#ababab] bg-[#f9f9f9] p-0"><svg class="ml-2 h-[42px] w-[42px]" viewBox="0 0 42 42"><path d="M42 0v42H0z" fill="#dedede"/></svg></th>
      ${letters.map(l => `<th scope="col" class="h-14 border-r-2 border-b-4 border-r-[#dedede] border-b-[#3a734c] bg-[#f2f2f2] p-0 text-[25px] leading-8 font-normal text-[#2f7346]">${l}</th>`).join('')}`;

    const taken = new Set();
    let html = '';
    heights.forEach((h, i) => {
      const r = i + 1;
      const tone = r === 2 ? 'bg-[#efefef] font-bold text-[#2f7346]' : 'bg-gradient-to-r from-[#f6f6f6] to-[#fdfdfd] font-normal text-[#5a5a5a]';
      html += `<tr style="height:${h}px"><th scope="row" class="border-r-2 border-b-2 border-r-[#ababab] border-b-[#d6d6d6] p-0 pb-1 text-center align-bottom text-2xl leading-[26px] ${tone}">${r < heights.length ? r : ''}</th>`;
      if (r > 25) {
        html += '<td colspan="18" class="bg-[#a0a0a0] p-0"></td></tr>';
        return;
      }
      for (let c = 0; c < letters.length; c++) {
        if (taken.has(r + ':' + c)) continue;
        const cell = cells[letters[c] + r] || {};
        const cols = cell.cols || 1, rows = cell.rows || 1;
        for (let y = 0; y < rows; y++) for (let x = 0; x < cols; x++) taken.add((r + y) + ':' + (c + x));
        const filter = cell.filter ? '<button aria-label="Filter" class="absolute right-0 bottom-0.5 flex size-[34px] items-center justify-center border-2 border-[#999] bg-gradient-to-b from-white to-[#efefef] text-[#777]"><svg class="h-3 w-[18px]"><use href="#filter"/></svg></button>' : '';
        html += `<td colspan="${cols}" rowspan="${rows}" class="relative border-r-2 border-b-2 py-0 ${rightLine(r, c + cols - 1)} ${bottomLine(r, c)} ${cell.cls || ''}">${cell.text || ''}${filter}</td>`;
      }
      html += '</tr>';
    });
    document.getElementById('grid').innerHTML = html;
  </script>

</body>
</html>
